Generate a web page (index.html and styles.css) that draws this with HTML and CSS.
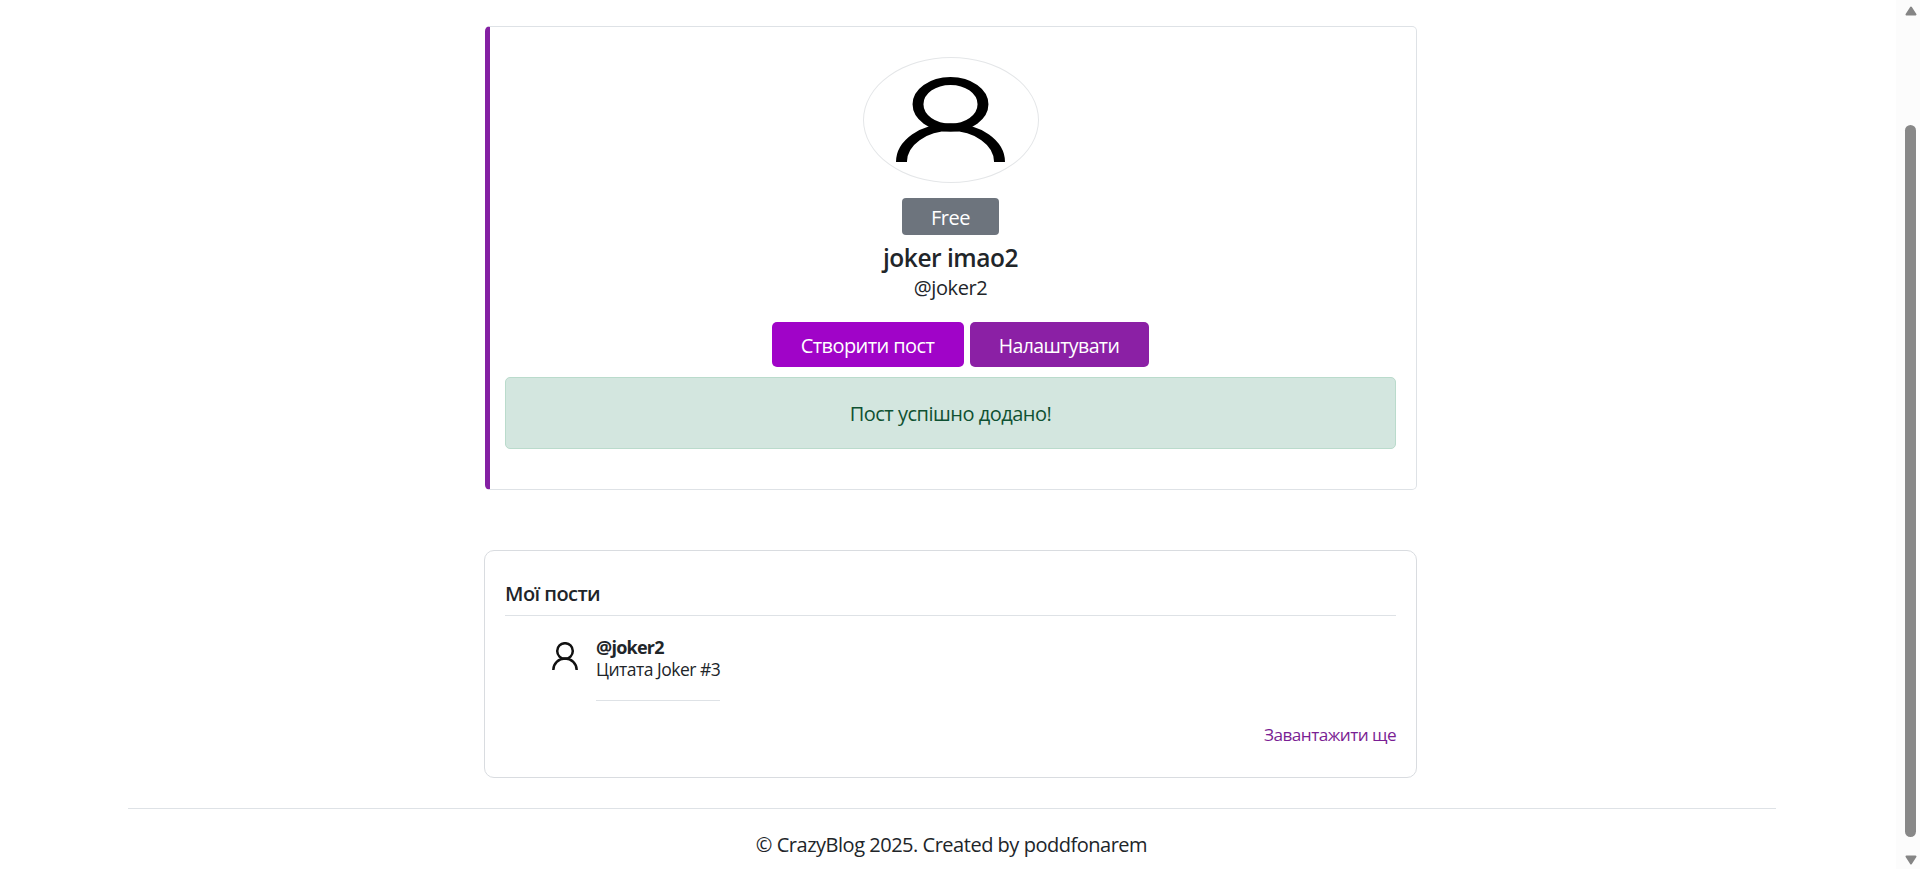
FILE: index.html
```html
<!DOCTYPE html>
<html lang="uk">
<head>
<meta charset="utf-8">
<title>CrazyBlog</title>
<link rel="stylesheet" href="styles.css">
</head>
<body>
<div class="page">
  <div class="content">
    <main class="column">
      <section class="profile">
        <div class="avatar">
          <svg viewBox="0 0 26 28" preserveAspectRatio="none" class="avatar-icon"><g fill="none" stroke="#000" stroke-width="2.6"><ellipse cx="13" cy="9" rx="7.75" ry="7.7"/><path d="M1.3 28A11.7 11.5 0 0 1 24.7 28"/></g></svg>
        </div>
        <span class="badge">Free</span>
        <h1 class="name">joker imao2</h1>
        <p class="handle">@joker2</p>
        <div class="actions">
          <a class="btn btn-create">Створити пост</a>
          <a class="btn btn-settings">Налаштувати</a>
        </div>
        <div class="alert">Пост успішно додано!</div>
      </section>
      <section class="posts">
        <h2 class="posts-title">Мої пости</h2>
        <article class="post">
          <svg viewBox="0 0 26 28" class="post-icon"><g fill="none" stroke="#111" stroke-width="2.5"><circle cx="13" cy="9" r="7.8"/><path d="M1.3 28A11.7 11.4 0 0 1 24.7 28"/></g></svg>
          <div class="post-body">
            <strong class="post-author">@joker2</strong>
            <p class="post-text">Цитата Joker #3</p>
          </div>
        </article>
        <a class="more">Завантажити ще</a>
      </section>
    </main>
    <footer class="footer">© CrazyBlog 2025. Created by poddfonarem</footer>
  </div>
  <div class="scrollbar">
    <svg class="arrow" viewBox="0 0 12 10"><path d="M6 1.5 10.5 8.5H1.5Z" fill="#858585" stroke="#858585" stroke-width="2" stroke-linejoin="round"/></svg>
    <div class="thumb"></div>
    <svg class="arrow" viewBox="0 0 12 10"><path d="M6 8.5 10.5 1.5H1.5Z" fill="#858585" stroke="#858585" stroke-width="2" stroke-linejoin="round"/></svg>
  </div>
</div>
</body>
</html>
```
FILE: styles.css
```css
* { box-sizing: border-box; }
body { margin: 0; background: #fff; color: #212529; font-family: "Open Sans", "Noto Sans", sans-serif; font-size: 20px; line-height: 30px; letter-spacing: -0.48px; }
h1, h2, p { margin: 0; }
.page { display: grid; grid-template-columns: 1fr 24px; height: 869px; overflow: hidden; }
.content { padding: 26px 0 0 6px; display: flex; flex-direction: column; align-items: center; }
.column { width: 932px; display: flex; flex-direction: column; gap: 60px; }
.profile { height: 464px; border: 1px solid #dee2e6; border-left: 5px solid #8420a3; border-radius: 5px; padding: 30px 20px 0 15px; display: flex; flex-direction: column; align-items: center; }
.avatar { width: 176px; height: 126px; border: 1px solid #e4e6e8; border-radius: 50%; padding: 19px 0 0 32px; }
.avatar-icon { display: block; width: 109px; height: 85px; }
.badge { width: 97px; height: 37px; margin-top: 15px; border-radius: 4px; background: #6d747d; color: #fff; line-height: 40px; text-align: center; }
.name { margin-top: 8px; font-size: 24.5px; font-weight: 600; line-height: 30px; }
.handle { line-height: 30px; letter-spacing: -0.4px; }
.actions { display: flex; gap: 6px; margin: 19px 0 0 19px; }
.btn { height: 45px; border-radius: 5px; color: #fff; line-height: 48px; text-align: center; }
.btn-create { width: 192px; background: #a004c8; letter-spacing: -0.6px; }
.btn-settings { width: 179px; background: #8b20a5; font-size: 19.5px; letter-spacing: -0.6px; }
.alert { width: 891px; height: 72px; margin-top: 10px; border: 1px solid #badbcc; border-radius: 5px; background: #d3e6df; color: #0f5132; line-height: 71px; text-align: center; letter-spacing: -0.5px; }
.posts { height: 228px; margin-left: -1px; border: 1px solid #d9dce0; border-radius: 10px; padding: 28px 20px 0; display: flex; flex-direction: column; }
.posts-title { height: 37px; border-bottom: 1px solid #dee2e6; font-size: 20px; font-weight: 600; line-height: 30px; letter-spacing: -0.55px; }
.post { display: flex; gap: 18px; padding: 20px 0 0 47px; }
.post-icon { width: 26px; height: 28px; margin-top: 6px; }
.post-body { display: flex; flex-direction: column; height: 65px; border-bottom: 1px solid #dee2e6; font-size: 17.5px; line-height: 22px; letter-spacing: -0.5px; }
.post-author { font-size: 18px; font-weight: 700; letter-spacing: -0.75px; }
.more { align-self: flex-end; margin-top: 19px; color: #7a1e94; font-size: 17.2px; line-height: 29px; letter-spacing: -0.55px; }
.footer { width: 1648px; margin: 30px 0 0 1px; padding-top: 21px; border-top: 1px solid #dee2e6; text-align: center; }
.scrollbar { display: flex; flex-direction: column; align-items: center; padding: 6px 0 5px 5px; background: #fcfcfc; }
.arrow { width: 12px; height: 10px; }
.thumb { width: 11px; height: 712px; margin: 109px 0 18px; border-radius: 6px; background: #888; }
```
